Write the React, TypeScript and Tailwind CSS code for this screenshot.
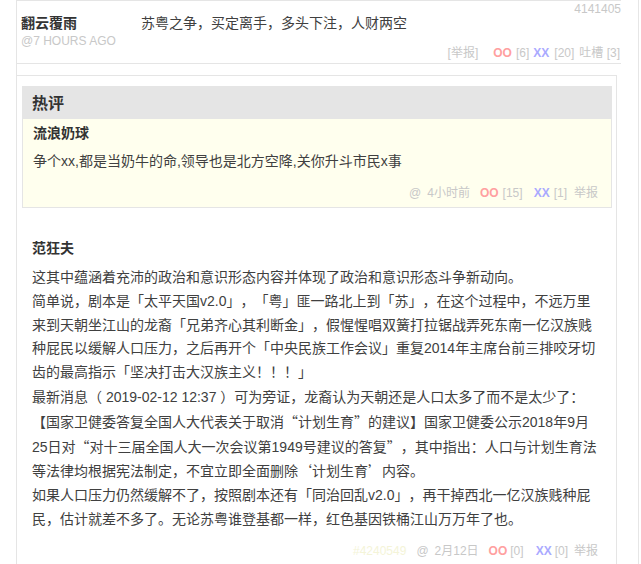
import React from "react";

const Q = ({ c }: { c: string }) => (
  <span className="font-['Noto_Sans_CJK_SC',sans-serif]">{c}</span>
);

const PL = () => (
  <span className="inline-block w-[14px] text-right font-['Noto_Sans_CJK_SC',sans-serif]">（</span>
);
const PR = () => (
  <span className="inline-block w-[14px] text-left font-['Noto_Sans_CJK_SC',sans-serif]">）</span>
);

const Gray = "text-[#c8c8c8]";

export default function App() {
  const lines: React.ReactNode[] = [
    "这其中蕴涵着充沛的政治和意识形态内容并体现了政治和意识形态斗争新动向。",
    "简单说，剧本是「太平天国v2.0」，「粤」匪一路北上到「苏」，在这个过程中，不远万里",
    "来到天朝坐江山的龙裔「兄弟齐心其利断金」，假惺惺唱双簧打拉锯战弄死东南一亿汉族贱",
    "种屁民以缓解人口压力，之后再开个「中央民族工作会议」重复2014年主席台前三排咬牙切",
    "齿的最高指示「坚决打击大汉族主义！！！」",
    <>
      最新消息<PL /> 2019-02-12 12:37 <PR />可为旁证，龙裔认为天朝还是人口太多了而不是太少了：
    </>,
    <>
      【国家卫健委答复全国人大代表关于取消<Q c="“" />计划生育<Q c="”" />的建议】国家卫健委公示2018年9月
    </>,
    <>
      25日对<Q c="“" />对十三届全国人大一次会议第1949号建议的答复<Q c="”" />，其中指出：人口与计划生育法
    </>,
    <>
      等法律均根据宪法制定，不宜立即全面删除<Q c="‘" />计划生育<Q c="’" />内容。
    </>,
    "如果人口压力仍然缓解不了，按照剧本还有「同治回乱v2.0」，再干掉西北一亿汉族贱种屁",
    "民，估计就差不多了。无论苏粤谁登基都一样，红色基因铁桶江山万万年了也。",
  ];

  return (
    <div className="w-[639px] h-[564px] overflow-hidden bg-white border-r border-[#e6e6e6] [text-spacing-trim:space-all] font-['Liberation_Sans','Noto_Sans_CJK_SC',sans-serif]">
      <div className="ml-[16px] w-[605px] border-l border-t border-[#e5e5e5]">
        {/* first comment */}
        <div className="relative h-[63px] border-b border-[#e5e5e5] flex pl-[4px] pt-[13px]">
          <div className="w-[120px] shrink-0">
            <div className="text-[14px] leading-[18px] font-bold text-[#333]">翻云覆雨</div>
            <div className={`text-[12px] leading-[16px] mt-[1px] ${Gray}`}>@7 HOURS AGO</div>
          </div>
          <div className="text-[14px] leading-[18px] text-[#404040] whitespace-nowrap">
            苏粤之争，买定离手，多头下注，人财两空
          </div>
          <div className={`absolute right-0 top-[1px] text-[12px] leading-[14px] ${Gray}`}>4141405</div>
          <div className={`absolute right-[1px] top-[44px] text-[12px] leading-[16px] whitespace-nowrap ${Gray}`}>
            <span>[举报]</span>
            <span className="ml-[15px] font-bold text-[#ffa0a0]">OO</span>
            <span className="ml-[4px]">[6]</span>
            <span className="ml-[4px] font-bold text-[#aaaaff]">XX</span>
            <span className="ml-[5px]">[20]</span>
            <span className="ml-[5px]">吐槽 [3]</span>
          </div>
        </div>

        {/* tucao box */}
        <div className="mt-[11px] -ml-px w-[601px] border border-[#e5e5e5] pl-[5px] pr-[4px] pt-[10px]">
          <div className="h-[33px] bg-[#e5e5e5] pl-[10px] pt-[8px] text-[16px] leading-[20px] font-bold text-[#333]">
            热评
          </div>
          <div className="border border-t-0 border-[#e5e5e5] bg-[#ffffee] pl-[10px] pr-[13px] pt-[5px] pb-[6px]">
            <div className="text-[14px] leading-[18px] font-bold text-[#333]">流浪奶球</div>
            <div className="mt-[7px] text-[14px] leading-[24px] text-[#404040] whitespace-nowrap">
              争个xx,都是当奶牛的命,领导也是北方空降,关你升斗市民x事
            </div>
            <div className={`mt-[12px] text-[12px] leading-[16px] whitespace-nowrap flex justify-end ${Gray}`}>
              <span>@</span>
              <span className="ml-[6px]">4小时前</span>
              <span className="ml-[10px] font-bold text-[#ffa0a0]">OO</span>
              <span className="ml-[4px]">[15]</span>
              <span className="ml-[11px] font-bold text-[#aaaaff]">XX</span>
              <span className="ml-[4px]">[1]</span>
              <span className="ml-[7px]">举报</span>
            </div>
          </div>

          <div className="border-b border-[#e5e5e5] pl-[10px] pr-[14px] pt-[31px] pb-[8px]">
            <div className="text-[14px] leading-[18px] font-bold text-[#333]">范狂夫</div>
            <div className="mt-[9px] text-[14px] leading-[23.8px] text-[#404040]">
              {lines.map((l, i) => (
                <div key={i} className="whitespace-nowrap">
                  {l}
                </div>
              ))}
            </div>
            <div className={`mt-[11px] text-[12px] leading-[16px] whitespace-nowrap flex justify-end ${Gray}`}>
              <span className="text-[#f4f4d8]">#4240549</span>
              <span className="ml-[10px]">@</span>
              <span className="ml-[6px]">2月12日</span>
              <span className="ml-[10px] font-bold text-[#ffa0a0]">OO</span>
              <span className="ml-[3px]">[0]</span>
              <span className="ml-[12px] font-bold text-[#aaaaff]">XX</span>
              <span className="ml-[3px]">[0]</span>
              <span className="ml-[6px]">举报</span>
            </div>
          </div>
        </div>
      </div>
    </div>
  );
}
